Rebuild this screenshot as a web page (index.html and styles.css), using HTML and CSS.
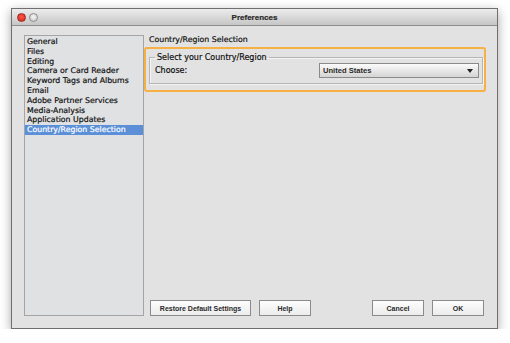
FILE: index.html
```html
<!DOCTYPE html>
<html>
<head>
	<title>Preferences</title>
<link rel="stylesheet" href="styles.css">
</head>
<body>
<div class="window">
	<div class="titlebar">
		<span class="dot red"></span>
		<span class="dot gray"></span>
		<div class="title">Preferences</div>
	</div>
	<div class="main">
		<ul class="nav">
			<li>General</li>
			<li>Files</li>
			<li>Editing</li>
			<li>Camera or Card Reader</li>
			<li>Keyword Tags and Albums</li>
			<li>Email</li>
			<li>Adobe Partner Services</li>
			<li>Media-Analysis</li>
			<li>Application Updates</li>
			<li class="on">Country/Region Selection</li>
		</ul>
		<div class="pane">
			<div class="heading">Country/Region Selection</div>
			<div class="mark">
				<fieldset class="group">
					<legend>Select your Country/Region</legend>
					<div class="row">
						<span>Choose:</span>
						<div class="select">United States<span class="arrow"></span></div>
					</div>
				</fieldset>
			</div>
			<div class="buttons">
				<div class="btn restore">Restore Default Settings</div>
				<div class="btn">Help</div>
				<div class="spacer"></div>
				<div class="btn">Cancel</div>
				<div class="btn">OK</div>
			</div>
		</div>
	</div>
</div>
</body>
</html>
```

FILE: styles.css
```css
*{margin: 0;padding: 0;box-sizing: border-box;}
body{
	background: #fff;
	font-family: "DejaVu Sans", "Liberation Sans", sans-serif;
	font-size: 8px;
	color: #111;
	-webkit-text-stroke: 0.2px currentColor;
}
ul{list-style: none;}
.window{
	margin: 8px 0 0 11px;
	width: 487px;
	height: 321px;
	border: 1px solid #6f6f6f;
	background: #e2e2e2;
	box-shadow: 0 3px 10px rgba(0,0,0,0.35);
	display: flex;
	flex-direction: column;
}
.titlebar{
	height: 17px;
	background: linear-gradient(#ececec, #c6c6c6);
	border-bottom: 1px solid #8e8e8e;
	display: flex;
	align-items: center;
	padding-left: 5px;
	position: relative;
}
.dot{width: 9px;height: 9px;border-radius: 50%;margin-right: 3px;}
.dot.red{background: radial-gradient(circle at 50% 40%, #ff5a48, #d0221a);border: 1px solid #9e2a22;}
.dot.gray{background: radial-gradient(circle at 50% 40%, #f6f6f6, #c4c4c4);border: 1px solid #8d8d8d;}
.title{
	position: absolute;
	left: 0;
	right: 0;
	text-align: center;
	font-family: "Liberation Sans", sans-serif;
	font-weight: bold;
	font-size: 8px;
	color: #2a2a2a;
}
.main{flex: 1;display: flex;padding: 9px 13px 12px 12px;}
.nav{
	width: 120px;
	background: #e0e1e3;
	border: 1px solid #a5a5a5;
	padding-top: 1px;
}
.nav li{height: 9.8px;line-height: 9.8px;padding-left: 2px;font-size: 7.8px;white-space: nowrap;}
.nav li.on{background: #5b8fd8;color: #fff;}
.pane{flex: 1;display: flex;flex-direction: column;padding-left: 5px;}
.heading{font-size: 7.8px;line-height: 10px;}
.mark{
	margin: 2px -2px 0 -5px;
	border: 2px solid #f6b043;
	border-radius: 3px;
	padding: 3px 1px 6px 3px;
}
.group{
	border: 1px solid #b5b5b5;
	box-shadow: inset 1px 1px 0 #f4f4f4, 1px 1px 0 #f4f4f4;
	padding: 0 3px 5px 5px;
}
.group legend{padding: 0 2px;line-height: 11px;}
.row{display: flex;align-items: center;justify-content: space-between;}
.select{
	width: 160px;
	height: 15px;
	border: 1px solid #8a8a8a;
	background: linear-gradient(#fbfbfb, #d4d4d4);
	display: flex;
	align-items: center;
	justify-content: space-between;
	padding: 0 5px 0 3px;
	font-family: "Liberation Sans", sans-serif;
	font-weight: bold;
	font-size: 7.6px;
	color: #2a2a2a;
	-webkit-text-stroke: 0;
}
.arrow{
	width: 0;
	height: 0;
	border-left: 3.5px solid transparent;
	border-right: 3.5px solid transparent;
	border-top: 4px solid #222;
}
.buttons{margin-top: auto;display: flex;align-items: center;padding-left: 1px;}
.spacer{flex: 1;}
.btn{
	height: 16px;
	width: 52px;
	margin-right: 8px;
	border: 1px solid #8b8b8b;
	background: linear-gradient(#fdfdfd, #ececec);
	display: flex;
	align-items: center;
	justify-content: center;
	font-family: "Liberation Sans", sans-serif;
	font-weight: bold;
	font-size: 7px;
	color: #2a2a2a;
	white-space: nowrap;
	-webkit-text-stroke: 0;
}
.btn.restore{width: 101px;}
.btn:last-child{margin-right: 0;}
```
